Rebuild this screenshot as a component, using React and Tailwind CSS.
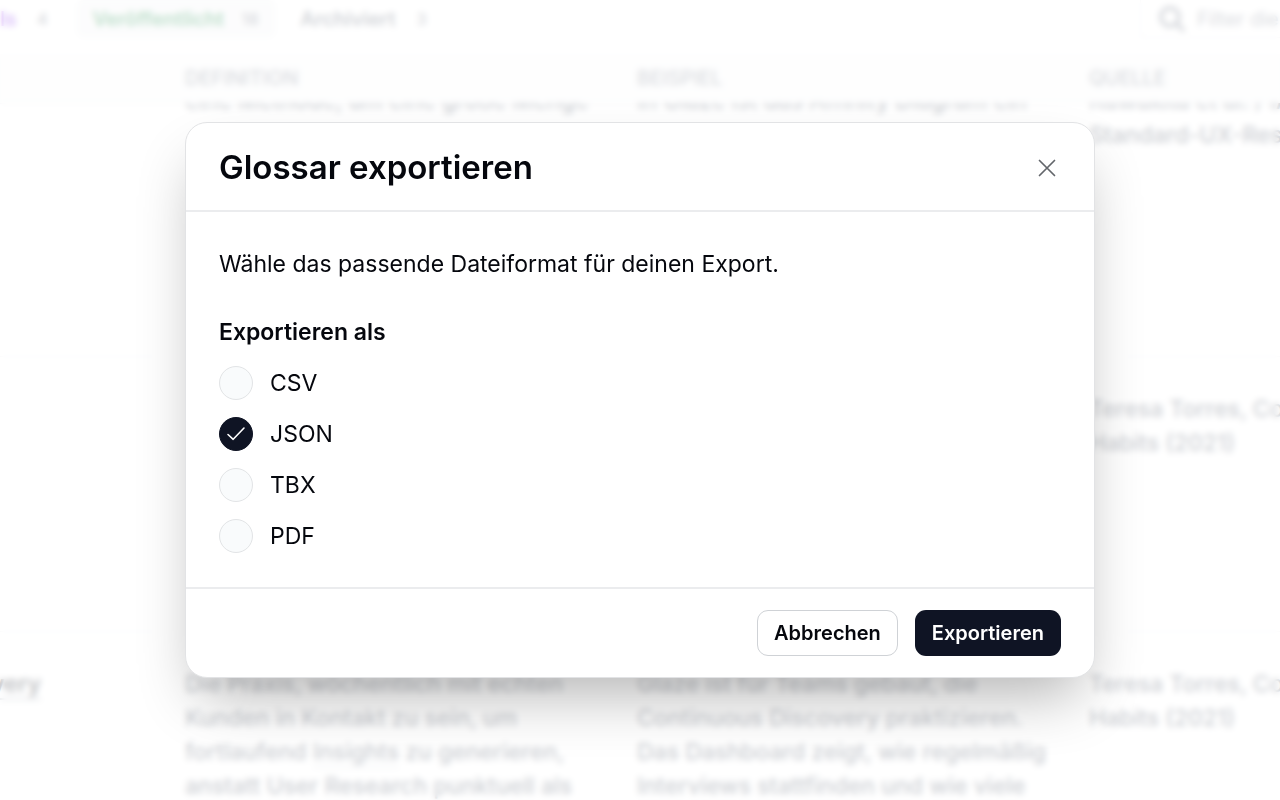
import { useState } from "react";

const tabs = [
  { label: "Details", count: 4, text: "text-violet-700", chip: "" },
  { label: "Veröffentlicht", count: 18, text: "text-green-700", chip: "bg-gray-100" },
  { label: "Archiviert", count: 3, text: "text-gray-600", chip: "" },
];

const formats = ["CSV", "JSON", "TBX", "PDF"];

function SearchIcon() {
  return (
    <svg viewBox="0 0 28 28" className="size-7 shrink-0 text-gray-500" fill="none" stroke="currentColor" strokeWidth="4" aria-hidden="true">
      <circle cx="13" cy="12" r="9" />
      <path d="M19.5 18.5 L26 25" strokeLinecap="round" />
    </svg>
  );
}

function GlossaryPage() {
  return (
    <div className="h-full overflow-hidden bg-white" inert>
      <header className="flex h-[54px] items-start justify-between">
        <nav className="-ml-[66px] flex h-[38px] shrink-0 items-center gap-2">
          {tabs.map((tab) => (
            <a
              key={tab.label}
              href="#"
              className={`flex h-[38px] items-center gap-4 rounded-lg px-4 text-[20px] font-semibold whitespace-nowrap ${tab.text} ${tab.chip}`}
            >
              {tab.label}
              <span className="w-5 text-center text-base text-gray-500">{tab.count}</span>
            </a>
          ))}
        </nav>
        <label className="flex h-[38px] w-[140px] shrink-0 items-center gap-3 overflow-hidden border-b border-l border-gray-200 pl-4">
          <SearchIcon />
          <input
            aria-label="Filter"
            placeholder="Filter die Einträge"
            className="w-[240px] shrink-0 text-[20px] placeholder:text-gray-500"
          />
        </label>
      </header>
      <table className="-ml-[267px] w-[1808px] table-fixed text-left">
        <thead className="relative z-10">
          <tr className="h-[49px] border-b border-gray-200 bg-gray-50 text-[20px] text-gray-500">
            <th className="font-medium">BEGRIFF</th>
            <th className="font-medium">DEFINITION</th>
            <th className="font-medium">BEISPIEL</th>
            <th className="font-medium">QUELLE</th>
          </tr>
        </thead>
        <tbody className="align-top text-[23px] leading-[34px] font-medium text-gray-700">
          <tr className="h-[253px] border-b border-gray-200">
            <td />
            <td><div className="-mt-5">eine Methode, um eine große Menge</div></td>
            <td><div className="-mt-5">In Glaze ist das Affinity Diagram ein</div></td>
            <td><div className="-mt-5">Kawakita et al. / IA<br />Standard-UX-Research</div></td>
          </tr>
          <tr className="h-[275px] border-b border-gray-200">
            <td />
            <td />
            <td />
            <td className="pt-[35px]">Teresa Torres, Continuous Discovery<br />Habits (2021)</td>
          </tr>
          <tr>
            <td className="pt-[35px] pr-[144px] text-right font-semibold text-gray-950">
              <span className="border-b-2 border-gray-400">Discovery</span>
            </td>
            <td className="pt-[35px]">
              Die Praxis, wöchentlich mit echten<br />
              Kunden in Kontakt zu sein, um<br />
              fortlaufend <span className="border-b-2 border-gray-300">Insights</span> zu generieren,<br />
              anstatt User Research punktuell als
            </td>
            <td className="pt-[35px]">
              Glaze ist für Teams gebaut, die<br />
              Continuous Discovery praktizieren.<br />
              Das Dashboard zeigt, wie regelmäßig<br />
              Interviews stattfinden und wie viele
            </td>
            <td className="pt-[35px]">Teresa Torres, Continuous Discovery<br />Habits (2021)</td>
          </tr>
        </tbody>
      </table>
    </div>
  );
}

function FormatOption({ name, checked, onSelect }) {
  return (
    <label className="flex cursor-pointer items-center gap-[17px]">
      <span className="grid size-[34px] place-items-center">
        <input
          type="radio"
          name="format"
          value={name}
          checked={checked}
          onChange={() => onSelect(name)}
          className="col-start-1 row-start-1 size-[34px] appearance-none rounded-full border border-[#e2e4e6] bg-[#f9fbfc] checked:border-[#0f1424] checked:bg-[#0f1424]"
        />
        {checked && (
          <svg viewBox="0 0 34 34" className="pointer-events-none col-start-1 row-start-1 size-[34px]" fill="none" stroke="white" strokeWidth="1.6" strokeLinecap="round" strokeLinejoin="round" aria-hidden="true">
            <path d="M9 17.5 L14.2 22.3 L25 11" />
          </svg>
        )}
      </span>
      {name}
    </label>
  );
}

export default function App() {
  const [format, setFormat] = useState("JSON");
  return (
    <div className="h-screen overflow-hidden font-['Inter',sans-serif] text-[#05070d]">
      <GlossaryPage />
      <div className="fixed inset-0 z-20 flex items-center justify-center bg-white/75 px-6 backdrop-blur-[3px]">
        <form
          role="dialog"
          aria-labelledby="dialog-title"
          onSubmit={(e) => e.preventDefault()}
          className="w-full max-w-[910px] rounded-[22px] border border-[#e2e3e5] bg-white shadow-[0_30px_60px_-14px_rgba(0,0,0,0.3)]"
        >
          <div className="flex h-[89px] items-center justify-between border-b-2 border-[#ebecee] px-[33px] pt-0.5">
            <h2 id="dialog-title" className="text-[33px] font-semibold">Glossar exportieren</h2>
            <button type="button" aria-label="Schließen" className="grid size-7 place-items-center text-[#63666b]">
              <svg viewBox="0 0 28 28" className="size-7" fill="none" stroke="currentColor" strokeWidth="1.7" strokeLinecap="round" aria-hidden="true">
                <path d="M6.5 6.5 L21.5 21.5 M21.5 6.5 L6.5 21.5" />
              </svg>
            </button>
          </div>
          <div className="px-[33px] pt-[35px] pb-[34px] text-[23px] leading-[34px]">
            <p>Wähle das passende Dateiformat für deinen Export.</p>
            <fieldset className="mt-[34px]">
              <legend className="font-semibold">Exportieren als</legend>
              <div className="mt-[17px] flex flex-col gap-[17px]">
                {formats.map((name) => (
                  <FormatOption key={name} name={name} checked={format === name} onSelect={setFormat} />
                ))}
              </div>
            </fieldset>
          </div>
          <div className="flex h-[90px] items-center justify-end gap-[17px] border-t-2 border-[#ebecee] px-[33px] text-[20px] font-semibold">
            <button type="button" className="h-[46px] rounded-[11px] border border-[#cfd2d6] bg-white px-4">Abbrechen</button>
            <button type="submit" className="h-[46px] rounded-[11px] bg-[#0f1424] px-[17px] text-white">Exportieren</button>
          </div>
        </form>
      </div>
    </div>
  );
}
